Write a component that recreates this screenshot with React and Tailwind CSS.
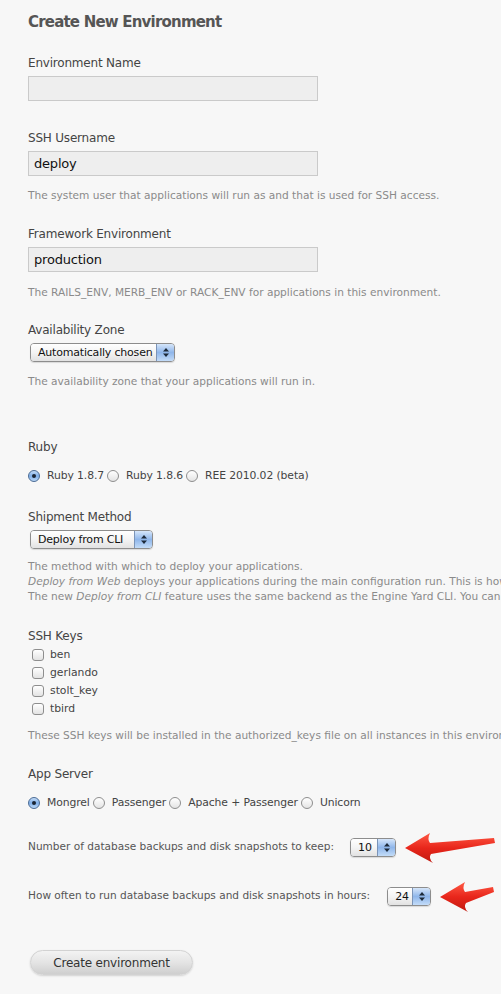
import React from 'react';

const font = { fontFamily: '"DejaVu Sans", "Liberation Sans", sans-serif' };

const Label = ({ children, className = '' }) => (
  <div className={`text-[12px] leading-[16px] tracking-[-0.2px] text-[#444] ${className}`}>{children}</div>
);

const Hint = ({ children, className = '' }) => (
  <div className={`text-[10.6px] leading-[14px] text-[#8a8a8a] whitespace-nowrap ${className}`}>{children}</div>
);

const TextInput = ({ value }) => (
  <div className="w-[290px] h-[25px] border border-[#cacaca] bg-[#eeeeee] pl-[5px] flex items-center text-[13px] tracking-[-0.2px] text-[#111]">
    {value}
  </div>
);

const Stepper = () => (
  <svg width="8" height="11" viewBox="0 0 8 11">
    <path d="M4 1 L7 4.5 L1 4.5 Z" fill="#1d2a3a" />
    <path d="M4 10 L7 6.5 L1 6.5 Z" fill="#1d2a3a" />
  </svg>
);

const Select = ({ value, width }) => (
  <div
    className="h-[19px] rounded-[4px] border border-[#8d8d8d] flex items-stretch overflow-hidden shadow-[0_1px_1px_rgba(0,0,0,0.12)] shrink-0"
    style={{ width }}
  >
    <div className="flex-1 bg-gradient-to-b from-[#ffffff] via-[#f4f4f4] to-[#e2e2e2] text-[11px] leading-[17px] tracking-[-0.2px] text-[#111] pl-[7px] whitespace-nowrap overflow-hidden">
      {value}
    </div>
    <div className="w-[18px] border-l border-[#7b94b8] bg-gradient-to-b from-[#d6e6fa] via-[#8fb6ea] to-[#c3dcf8] flex items-center justify-center">
      <Stepper />
    </div>
  </div>
);

const Radio = ({ checked }) => (
  <span
    className={`inline-flex w-[12px] h-[12px] rounded-full border items-center justify-center shrink-0 ${
      checked
        ? 'border-[#4a6b95] bg-gradient-to-b from-[#c4dcf7] via-[#7eaee8] to-[#bcd8f7]'
        : 'border-[#8e8e8e] bg-gradient-to-b from-[#ffffff] to-[#e4e4e4]'
    }`}
  >
    {checked && <span className="w-[4px] h-[4px] rounded-full bg-[#1b2533]" />}
  </span>
);

const RadioGroup = ({ options }) => (
  <div className="flex items-center h-[16px] text-[10.8px] tracking-[-0.1px] text-[#444]">
    {options.map((o, i) => (
      <span key={o} className="flex items-center">
        <Radio checked={i === 0} />
        <span className="ml-[7px] mr-[3px] whitespace-nowrap">{o}</span>
      </span>
    ))}
  </div>
);

const Checkbox = ({ label }) => (
  <div className="flex items-center h-[18px] text-[10.8px] text-[#444]">
    <span className="ml-[4px] w-[12px] h-[12px] rounded-[3px] border border-[#8e8e8e] bg-gradient-to-b from-[#ffffff] to-[#e3e3e3]" />
    <span className="ml-[6px]">{label}</span>
  </div>
);

const Arrow = ({ width }) => (
  <svg width={width} height="34" viewBox={`0 0 ${width} 34`} className="shrink-0">
    <defs>
      <linearGradient id={`ag${width}`} x1="0" y1="0" x2="0" y2="1">
        <stop offset="0" stopColor="#ff5a45" />
        <stop offset="0.5" stopColor="#e8261b" />
        <stop offset="1" stopColor="#c01a10" />
      </linearGradient>
    </defs>
    <path
      d={`M1 18 L26 3 Q23 9 26 13 L${width - 2} 8 L${width - 1} 13 L27 24 Q24 28 29 33 Z`}
      fill={`url(#ag${width})`}
    />
  </svg>
);

export default function App() {
  return (
    <div className="min-h-screen w-full bg-[#f7f7f7] overflow-hidden pl-[28px] pt-[12px] pb-[20px]" style={font}>
      <h1 className="text-[15px] leading-[20px] font-bold tracking-[-0.8px] text-[#555]">Create New Environment</h1>

      <Label className="mt-[23px]">Environment Name</Label>
      <div className="mt-[5px]">
        <TextInput value="" />
      </div>

      <Label className="mt-[29px]">SSH Username</Label>
      <div className="mt-[5px]">
        <TextInput value="deploy" />
      </div>
      <Hint className="mt-[12px]">The system user that applications will run as and that is used for SSH access.</Hint>

      <Label className="mt-[24px]">Framework Environment</Label>
      <div className="mt-[5px]">
        <TextInput value="production" />
      </div>
      <Hint className="mt-[13px]">The RAILS_ENV, MERB_ENV or RACK_ENV for applications in this environment.</Hint>

      <Label className="mt-[23px]">Availability Zone</Label>
      <div className="mt-[5px] ml-[2px]">
        <Select value="Automatically chosen" width={145} />
      </div>
      <Hint className="mt-[12px]">The availability zone that your applications will run in.</Hint>

      <Label className="mt-[51px]">Ruby</Label>
      <div className="mt-[13px]">
        <RadioGroup options={['Ruby 1.8.7', 'Ruby 1.8.6', 'REE 2010.02 (beta)']} />
      </div>

      <Label className="mt-[25px]">Shipment Method</Label>
      <div className="mt-[5px] ml-[2px]">
        <Select value="Deploy from CLI" width={123} />
      </div>
      <div className="mt-[10px] text-[10.6px] leading-[15px] text-[#8a8a8a] whitespace-nowrap">
        <div>The method with which to deploy your applications.</div>
        <div>
          <em>Deploy from Web</em> deploys your applications during the main configuration run. This is how deploys have always worked.
        </div>
        <div>
          The new <em>Deploy from CLI</em> feature uses the same backend as the Engine Yard CLI. You can deploy with ey deploy.
        </div>
      </div>

      <Label className="mt-[24px]">SSH Keys</Label>
      <div className="mt-[2px] flex flex-col">
        {['ben', 'gerlando', 'stolt_key', 'tbird'].map((k) => (
          <Checkbox key={k} label={k} />
        ))}
      </div>
      <Hint className="mt-[10px]">These SSH keys will be installed in the authorized_keys file on all instances in this environment.</Hint>

      <Label className="mt-[24px]">App Server</Label>
      <div className="mt-[13px]">
        <RadioGroup options={['Mongrel', 'Passenger', 'Apache + Passenger', 'Unicorn']} />
      </div>

      <div className="mt-[19px] flex items-center text-[10.55px] text-[#555] whitespace-nowrap">
        <span>Number of database backups and disk snapshots to keep:</span>
        <span className="ml-[16px]">
          <Select value="10" width={46} />
        </span>
        <span className="ml-[8px]">
          <Arrow width={92} />
        </span>
      </div>

      <div className="mt-[15px] flex items-center text-[10.55px] text-[#555] whitespace-nowrap">
        <span>How often to run database backups and disk snapshots in hours:</span>
        <span className="ml-[17px]">
          <Select value="24" width={44} />
        </span>
        <span className="ml-[8px]">
          <Arrow width={56} />
        </span>
      </div>

      <button className="mt-[37px] ml-[2px] w-[163px] h-[25px] rounded-full border border-[#d2d2d2] bg-gradient-to-b from-[#f3f3f3] via-[#e4e4e4] to-[#cfcfcf] shadow-[0_1px_2px_rgba(0,0,0,0.15)] text-[12px] tracking-[-0.2px] text-[#333]">
        Create environment
      </button>
    </div>
  );
}
